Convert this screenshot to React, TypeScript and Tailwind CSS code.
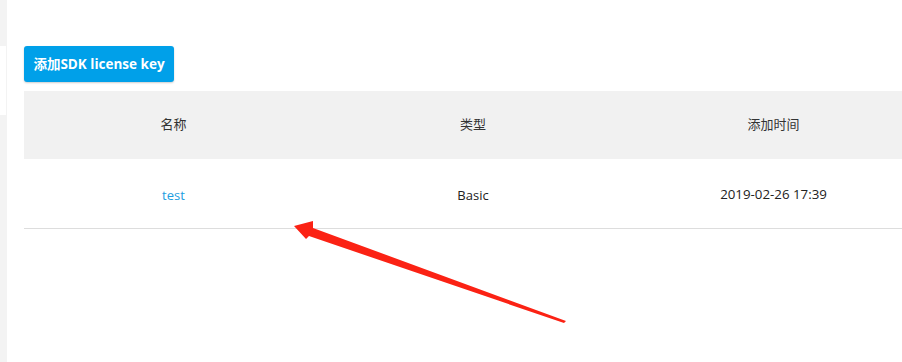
const FONT = "font-['Open_Sans','Noto_Sans_CJK_SC',sans-serif]";

const ROWS = [{ name: "test", type: "Basic", time: "2019-02-26 17:39" }];

function Arrow() {
  return (
    <svg className="pointer-events-none absolute left-0 top-0" width="902" height="362" viewBox="0 0 902 362">
      <polygon
        points="294,226 313,221 313,228 566,321 564,323 309,236 306,239"
        fill="#fb2214"
      />
    </svg>
  );
}

export default function App() {
  return (
    <div className={`relative flex h-[362px] w-[902px] overflow-hidden bg-white ${FONT}`}>
      <div className="flex w-[7px] shrink-0 flex-col bg-[#f3f3f3]">
        <div className="mt-[46px] h-[69px] w-[6px] bg-white" />
      </div>

      <div className="flex min-w-0 flex-1 flex-col pl-[17px] pt-[46px]">
        <button className="h-9 w-[150px] rounded-[3px] bg-[#00a0e9] text-[13.5px] font-bold text-white shadow-[0_1px_2px_rgba(0,0,0,0.2)]">
          添加SDK license key
        </button>

        <table className="mt-[9px] w-[900px] shrink-0 table-fixed border-collapse text-[13px]">
          <thead>
            <tr className="h-[68px] bg-[#f1f1f1] text-[#333]">
              <th className="w-[299px] font-normal">名称</th>
              <th className="w-[300px] font-normal">类型</th>
              <th className="w-[301px] font-normal">添加时间</th>
            </tr>
          </thead>
          <tbody>
            {ROWS.map((r) => (
              <tr key={r.name} className="h-[69px] border-b border-[#dddddd] text-[#222]">
                <td className="pt-[4px] text-center text-[#1c9ddf]">{r.name}</td>
                <td className="pt-[4px] text-center">{r.type}</td>
                <td className="pt-[4px] text-center text-[13.3px]">{r.time}</td>
              </tr>
            ))}
          </tbody>
        </table>
      </div>

      <Arrow />
    </div>
  );
}
